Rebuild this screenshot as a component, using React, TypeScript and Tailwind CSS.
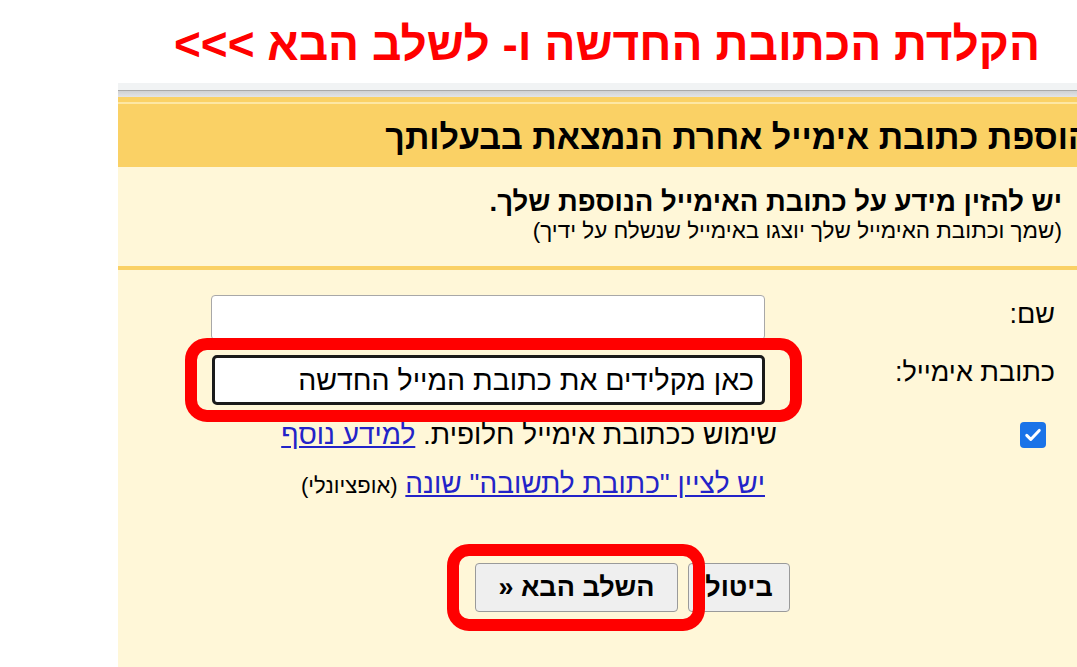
import React from "react";

const font = { fontFamily: '"Liberation Sans", Arial, "DejaVu Sans", sans-serif' };

export default function App() {
  return (
    <div
      className="w-[1077px] h-[667px] overflow-hidden bg-white"
      style={font}
    >
      {/* Red instruction title */}
      <div dir="rtl" className="h-[83px] pr-[37px] pt-[16px]">
        <h1 className="text-[46px] leading-[56px] font-bold text-[#ff0000] whitespace-nowrap">
          הקלדת הכתובת החדשה ו- לשלב הבא &gt;&gt;&gt;
        </h1>
      </div>

      {/* Screenshot panel */}
      <div dir="rtl" className="ml-[118px] w-[959px] h-[584px] overflow-hidden bg-[#fff7d8]">
        {/* top window chrome */}
        <div className="h-[7px] bg-[#f1f3f4]" />
        <div className="h-[1px] bg-[#a9a9a9]" />
        <div className="h-[6px] bg-gradient-to-b from-[#cfd1d4] to-[#e3e4e6]" />

        {/* orange header */}
        <div className="bg-[#fad165]">
          <div className="h-[5px]" />
          <div className="h-[2px] bg-[#fde7a4]" />
          <div className="h-[63px] flex items-center -mr-[14px]">
            <h2 className="text-[34px] leading-[40px] font-bold text-black whitespace-nowrap pt-[2px]">
              הוספת כתובת אימייל אחרת הנמצאת בבעלותך
            </h2>
          </div>
        </div>

        {/* intro */}
        <div className="pr-[15px] pt-[20px] h-[99px]">
          <p className="text-[27.5px] leading-[30px] font-bold text-black">
            יש להזין מידע על כתובת האימייל הנוספת שלך.
          </p>
          <p className="text-[22.5px] leading-[26px] text-black mt-[1px]">
            (שמך וכתובת האימייל שלך יוצגו באימייל שנשלח על ידיך)
          </p>
        </div>
        <div className="h-[4px] bg-[#fad165]" />

        {/* form */}
        <div className="pt-[25px]">
          <div className="flex items-center">
            <label className="w-[312px] pr-[22px] text-[27px] leading-[32px] text-black pb-[8px]">שם:</label>
            <input
              type="text"
              className="w-[554px] h-[45px] bg-white border border-[#a8a8a8] rounded-[4px] outline-none"
            />
          </div>

          <div className="flex items-start mt-[15px]">
            <label className="w-[312px] pr-[22px] pt-[1px] text-[27px] leading-[32px] text-black">כתובת אימייל:</label>
            <div className="relative">
              <input
                type="text"
                readOnly
                value="כאן מקלידים את כתובת המייל החדשה"
                className="w-[553px] h-[50px] bg-white border-[3px] border-[#1a1a1a] rounded-[5px] outline-none pr-[8px] text-[28.5px] text-black"
                style={font}
              />
              <span className="absolute -top-[17px] -bottom-[17px] -right-[37px] -left-[27px] border-[12px] border-[#ff0000] rounded-[22px] pointer-events-none" />
            </div>
          </div>

          <div className="flex items-start mt-[17px]">
            <div className="w-[300px] pr-[31px]">
              <span className="w-[26px] h-[26px] rounded-[4px] bg-[#1a73e8] flex items-center justify-center">
                <svg width="20" height="20" viewBox="0 0 24 24" fill="none">
                  <path d="M4.5 12.5l4.8 4.8L19.5 6.5" stroke="white" strokeWidth="3.6" strokeLinecap="round" strokeLinejoin="round" />
                </svg>
              </span>
            </div>
            <div className="-mt-[2px]">
              <p className="text-[28px] leading-[30px] text-black">
                שימוש ככתובת אימייל חלופית.{" "}
                <a href="#" className="text-[#2323c8] underline">למידע נוסף</a>
              </p>
              <p className="mt-[19px] mr-[12px] text-[28px] leading-[30px]">
                <a href="#" className="text-[#2323c8] underline">יש לציין "כתובת לתשובה" שונה</a>{" "}
                <span className="text-[22px] text-black">(אופציונלי)</span>
              </p>
            </div>
          </div>

          <div className="flex pr-[287px] mt-[62px] gap-[10px]">
            <button className="w-[102px] h-[49px] bg-[#efefef] border border-[#9a9a9a] rounded-[4px] text-[27px] font-bold text-black" style={font}>
              ביטול
            </button>
            <div className="relative">
              <button className="w-[203px] h-[49px] bg-[#efefef] border border-[#9a9a9a] rounded-[4px] text-[27px] font-bold text-black" style={font}>
                השלב הבא «
              </button>
              <span className="absolute -top-[19px] -bottom-[19px] -right-[27px] -left-[28px] border-[12px] border-[#ff0000] rounded-[22px] pointer-events-none" />
            </div>
          </div>
        </div>
      </div>
    </div>
  );
}
